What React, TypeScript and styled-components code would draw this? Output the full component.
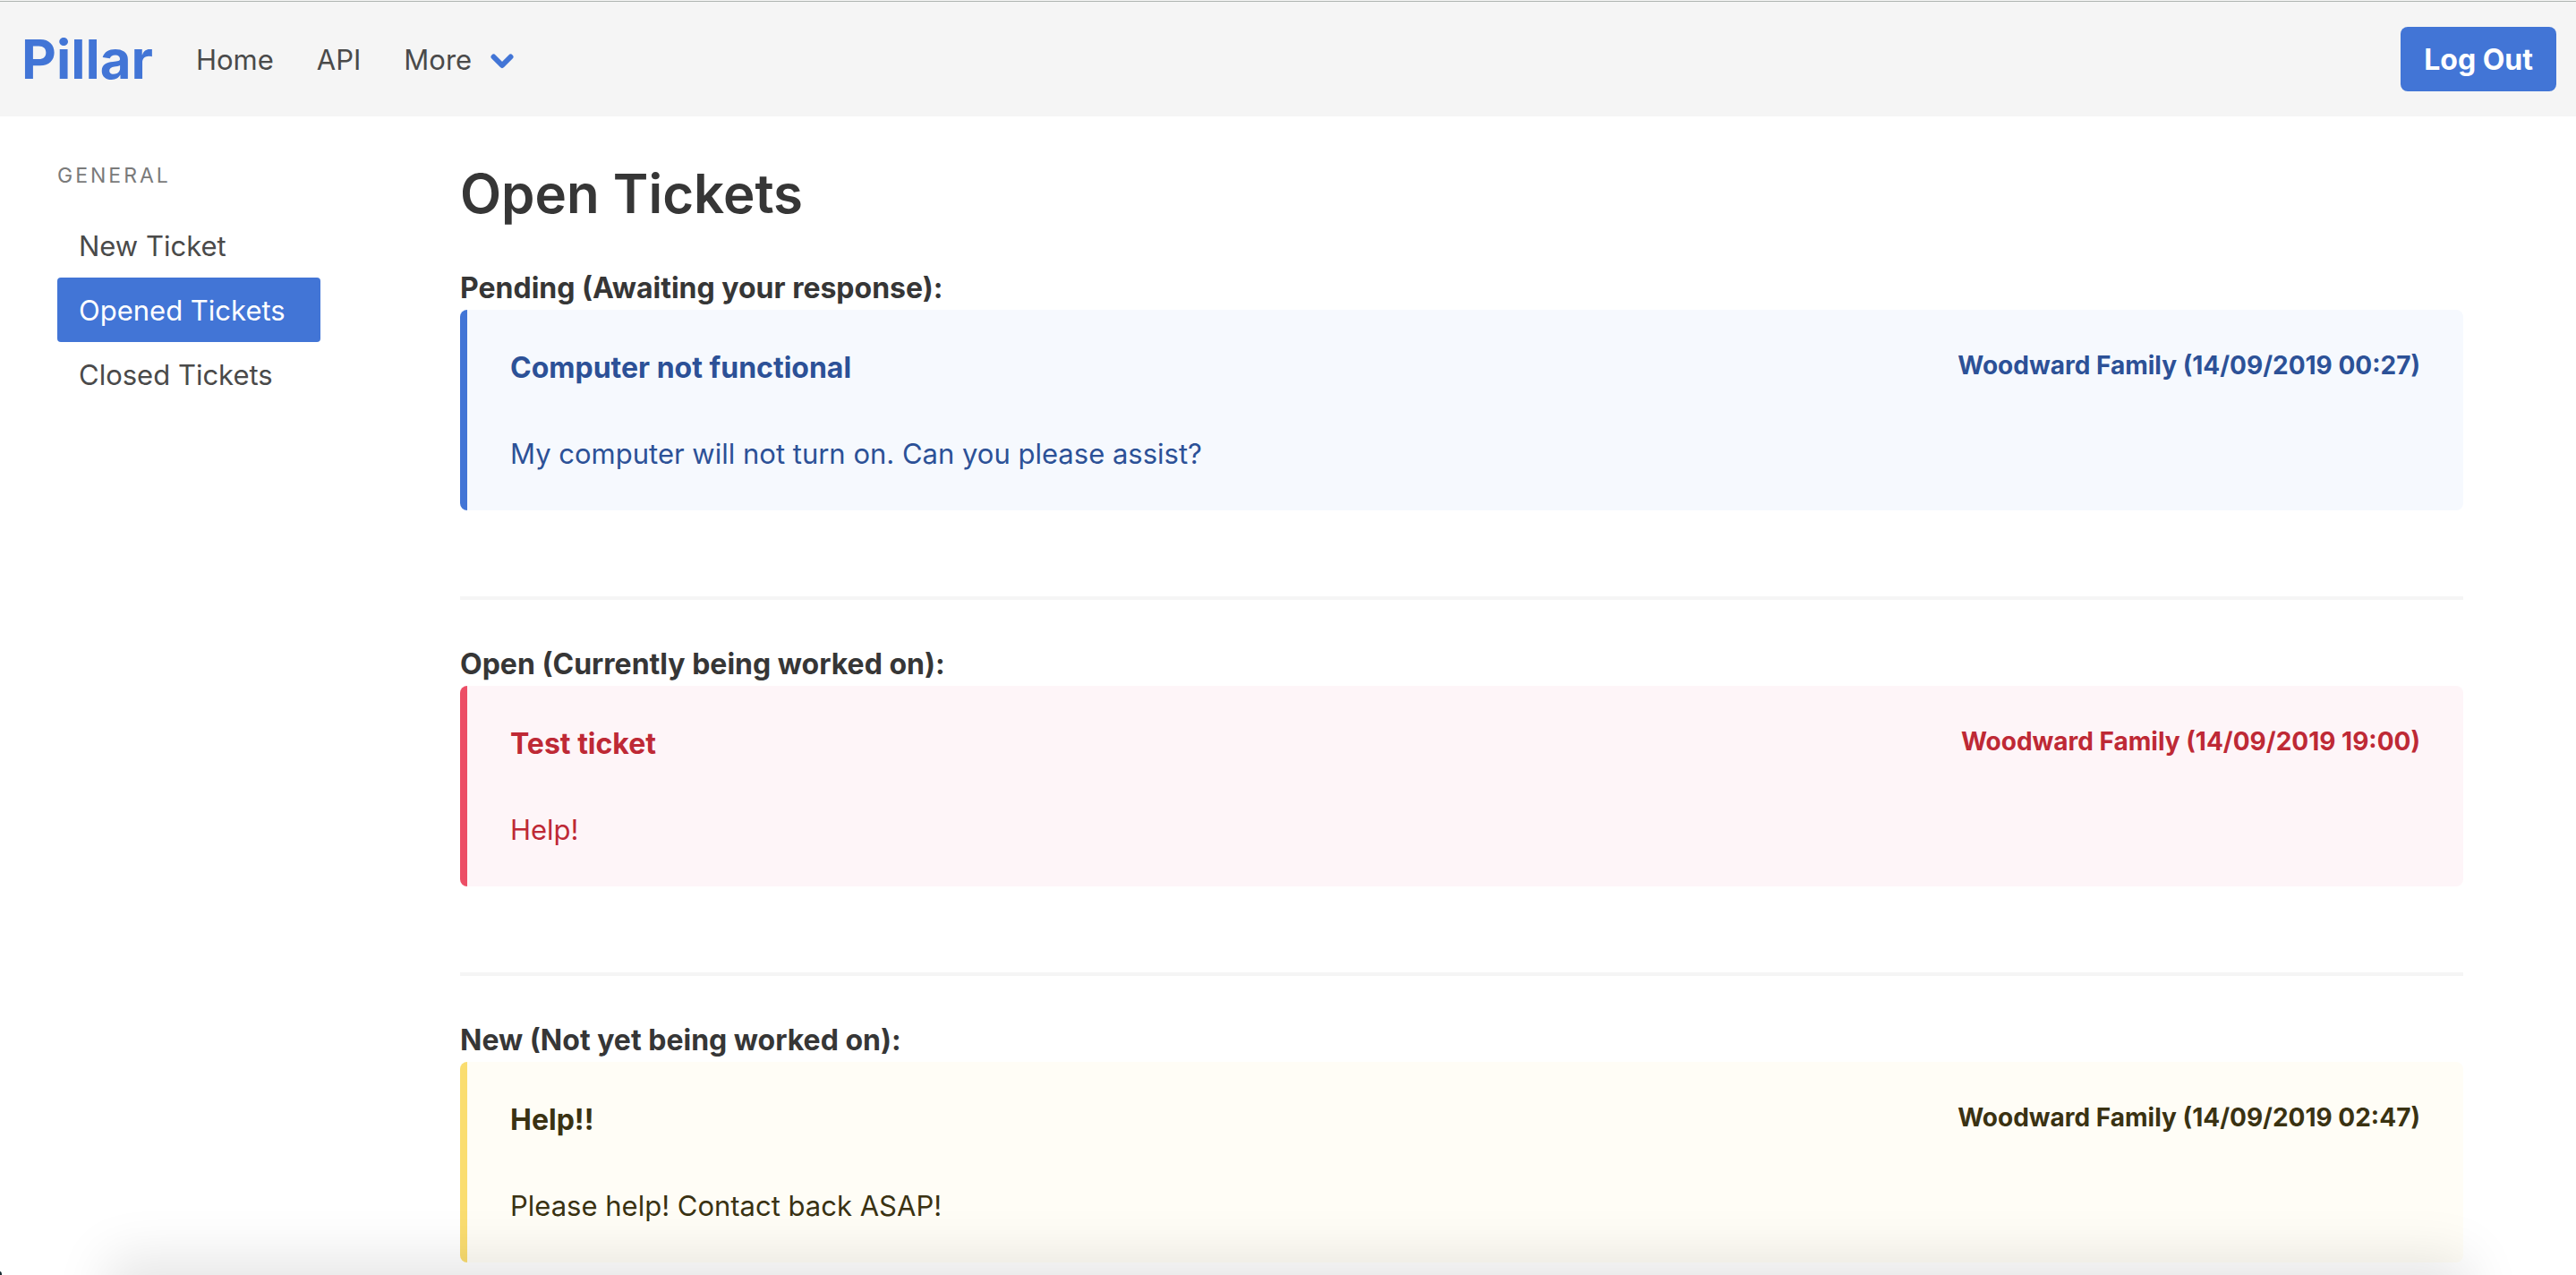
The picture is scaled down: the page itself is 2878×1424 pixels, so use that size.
import React from "react";
import styled, { createGlobalStyle } from "styled-components";

const blue = "#4275d6";

const GlobalStyle = createGlobalStyle`
  *, *::before, *::after { box-sizing: border-box; }
  body {
    margin: 0;
    background: #fff;
    color: #4a4a4a;
    font: 400 31px/48px Inter, "Liberation Sans", sans-serif;
    overflow-x: hidden;
  }
  h1, h2, h3, p, ul { margin: 0; padding: 0; }
  a { color: inherit; text-decoration: none; }
  button { font: inherit; border: 0; cursor: pointer; }
`;

const Navbar = styled.header`
  display: flex;
  align-items: center;
  height: 130px;
  padding: 2px 22px 0 0;
  background: #f5f5f5;
  box-shadow: inset 0 1px #f5f5f5, inset 0 2px #afb5b1;
`;

const Brand = styled.a`
  padding: 0 24px;
  color: ${blue};
  font-size: 60px;
  font-weight: 700;
  line-height: 84px;
`;

const NavLinks = styled.nav`
  display: flex;
  flex: 1;
  padding-top: 2px;
`;

const NavLink = styled.a`
  padding: 0 24px;
`;

const NavMenu = styled.button`
  display: flex;
  align-items: center;
  gap: 21px;
  padding: 0 24px;
  background: none;
  color: inherit;
`;

const LogOut = styled.button`
  height: 72px;
  padding: 2px 26px 0;
  border-radius: 8px;
  background: ${blue};
  color: #fff;
  font-size: 32px;
  font-weight: 700;
`;

const Page = styled.div`
  display: flex;
  gap: 156px;
  padding: 48px 126px 0 64px;
`;

const Sidebar = styled.aside`
  flex: 0 0 294px;
`;

const MenuLabel = styled.p`
  margin-bottom: 24px;
  color: #7a7a7a;
  font-size: 23px;
  line-height: 36px;
  letter-spacing: 3px;
  text-transform: uppercase;
`;

const MenuList = styled.ul`
  list-style: none;
`;

const MenuLink = styled.a<{ $active?: boolean }>`
  display: block;
  padding: 17px 24px 15px;
  border-radius: 4px;
  line-height: 40px;
  background: ${(p) => (p.$active ? blue : "transparent")};
  color: ${(p) => (p.$active ? "#fff" : "inherit")};
`;

const Main = styled.main`
  flex: 1;
  min-width: 0;
`;

const Title = styled.h1`
  padding-top: 2px;
  margin-bottom: 46px;
  color: #363636;
  font-size: 60px;
  font-weight: 600;
  line-height: 72px;
`;

const Section = styled.section`
  & + & {
    margin-top: 96px;
    border-top: 4px solid #f5f5f5;
    padding-top: 48px;
  }
`;

const SectionTitle = styled.h2`
  color: #363636;
  font-size: 32px;
  font-weight: 700;
  line-height: 48px;
`;

type Tone = "info" | "danger" | "warning";

const tones: Record<Tone, { edge: string; fill: string; text: string }> = {
  info: { edge: blue, fill: "#f6f9fe", text: "#2c5197" },
  danger: { edge: "#ec4e66", fill: "#fef5f8", text: "#be2935" },
  warning: { edge: "#fadd70", fill: "#fffdf6", text: "#3a3212" },
};

const Card = styled.article<{ $tone: Tone }>`
  padding: 41px 48px 39px;
  border-left: 8px solid ${(p) => tones[p.$tone].edge};
  border-radius: 8px;
  background: ${(p) => tones[p.$tone].fill};
  color: ${(p) => tones[p.$tone].text};
`;

const CardHead = styled.div`
  display: flex;
  justify-content: space-between;
  align-items: flex-start;
  margin-bottom: 48px;
`;

const CardTitle = styled.h3`
  font-size: 32px;
  font-weight: 700;
  line-height: 48px;
`;

const CardMeta = styled.span`
  font-size: 28px;
  font-weight: 700;
  line-height: 42px;
`;

const BottomShade = styled.div`
  position: fixed;
  left: 120px;
  right: 120px;
  bottom: -160px;
  height: 160px;
  box-shadow: 0 -20px 60px rgba(0, 0, 0, 0.1);
  pointer-events: none;
`;

const WindowCorner = styled.div`
  position: fixed;
  left: 0;
  bottom: 0;
  width: 2px;
  height: 4px;
  border-top-right-radius: 2px 4px;
  background: #16282f;
  pointer-events: none;
`;

interface Ticket {
  heading: string;
  tone: Tone;
  title: string;
  meta: string;
  body: string;
}

const tickets: Ticket[] = [
  {
    heading: "Pending (Awaiting your response):",
    tone: "info",
    title: "Computer not functional",
    meta: "Woodward Family (14/09/2019 00:27)",
    body: "My computer will not turn on. Can you please assist?",
  },
  {
    heading: "Open (Currently being worked on):",
    tone: "danger",
    title: "Test ticket",
    meta: "Woodward Family (14/09/2019 19:00)",
    body: "Help!",
  },
  {
    heading: "New (Not yet being worked on):",
    tone: "warning",
    title: "Help!!",
    meta: "Woodward Family (14/09/2019 02:47)",
    body: "Please help! Contact back ASAP!",
  },
];

const menu = ["New Ticket", "Opened Tickets", "Closed Tickets"];

export default function App() {
  return (
    <>
      <GlobalStyle />
      <Navbar>
        <Brand href="#">Pillar</Brand>
        <NavLinks>
          <NavLink href="#">Home</NavLink>
          <NavLink href="#">API</NavLink>
          <NavMenu type="button">
            More
            <svg width="26" height="20" viewBox="0 0 26 20" aria-hidden="true">
              <path
                d="M3.5 6.5 L13 16 L22.5 6.5"
                fill="none"
                stroke={blue}
                strokeWidth="6"
                strokeLinecap="round"
                strokeLinejoin="round"
              />
            </svg>
          </NavMenu>
        </NavLinks>
        <LogOut type="button">Log Out</LogOut>
      </Navbar>
      <Page>
        <Sidebar>
          <MenuLabel>General</MenuLabel>
          <MenuList>
            {menu.map((item) => (
              <li key={item}>
                <MenuLink href="#" $active={item === "Opened Tickets"}>{item}</MenuLink>
              </li>
            ))}
          </MenuList>
        </Sidebar>
        <Main>
          <Title>Open Tickets</Title>
          {tickets.map((t) => (
            <Section key={t.heading}>
              <SectionTitle>{t.heading}</SectionTitle>
              <Card $tone={t.tone}>
                <CardHead>
                  <CardTitle>{t.title}</CardTitle>
                  <CardMeta>{t.meta}</CardMeta>
                </CardHead>
                <p>{t.body}</p>
              </Card>
            </Section>
          ))}
        </Main>
      </Page>
      <BottomShade />
      <WindowCorner />
    </>
  );
}
